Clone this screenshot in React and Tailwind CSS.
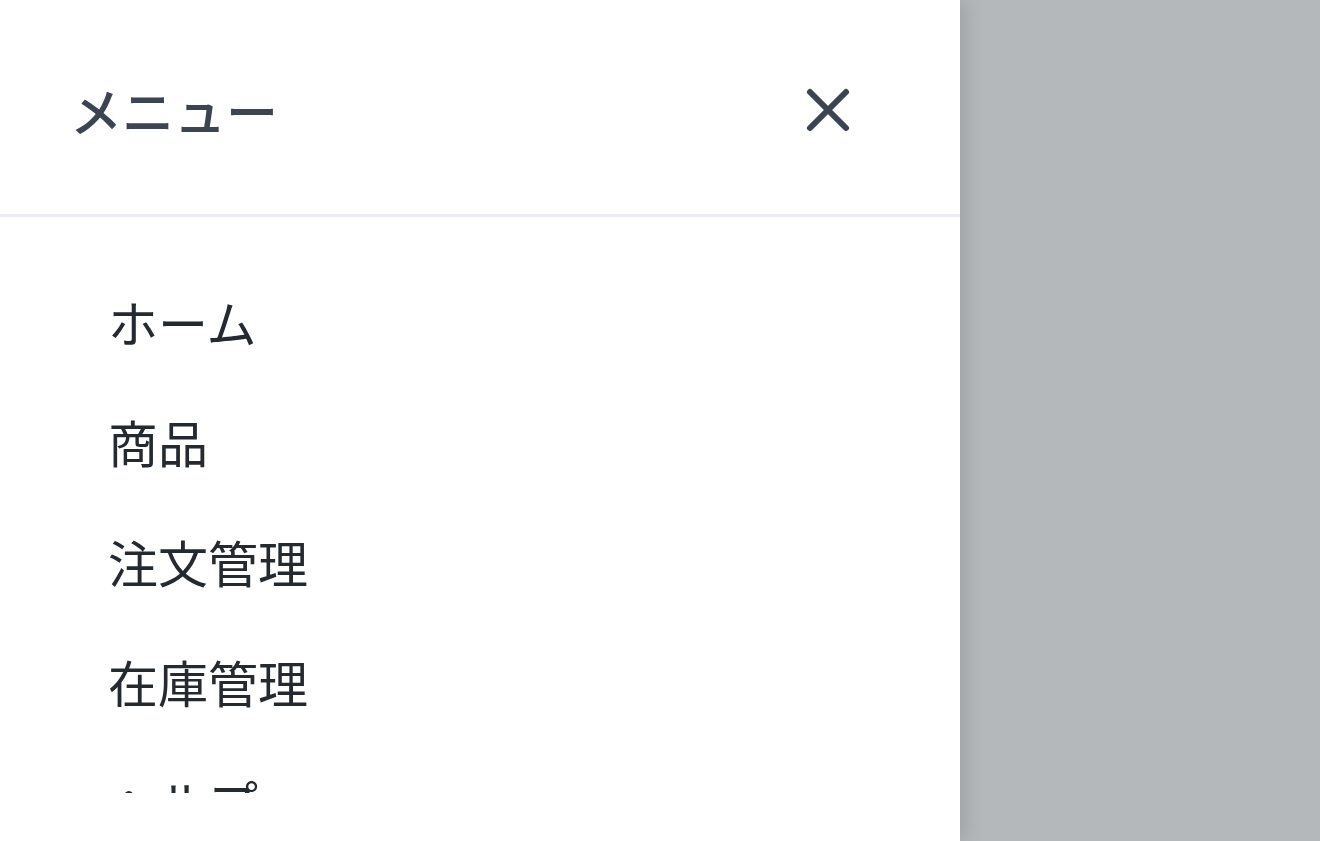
import { X } from "lucide-react";

const items = ["ホーム", "商品", "注文管理", "在庫管理", "ヘルプ"];

export default function App() {
  return (
    <div
      className="flex h-[841px] w-[1320px] overflow-hidden bg-[#b5b8bb]"
      style={{ fontFamily: '"Noto Sans CJK JP", "Noto Sans", sans-serif' }}
    >
      <aside className="relative z-10 flex h-full w-[960px] shrink-0 flex-col bg-white shadow-[6px_0_18px_rgba(0,0,0,0.12)]">
        <header className="flex items-center justify-between border-b-[3px] border-[#eceef1] pb-[44px] pl-[70px] pr-[72px] pt-[50px]">
          <h2 className="text-[52px] font-medium leading-none text-[#3d4451]">メニュー</h2>
          <button className="rounded-[24px] p-[24px] text-[#3d4451]">
            <X size={72} strokeWidth={2} />
          </button>
        </header>

        <nav className="flex-1 overflow-hidden px-[72px] pt-[44px]">
          {items.map((item) => (
            <a
              key={item}
              href="#"
              className="block px-[36px] py-[24px] text-[50px] leading-[72px] text-[#252a31]"
            >
              {item}
            </a>
          ))}
        </nav>

        <div className="h-[48px] shrink-0 bg-white" />
      </aside>
      <div className="flex-1" />
    </div>
  );
}
